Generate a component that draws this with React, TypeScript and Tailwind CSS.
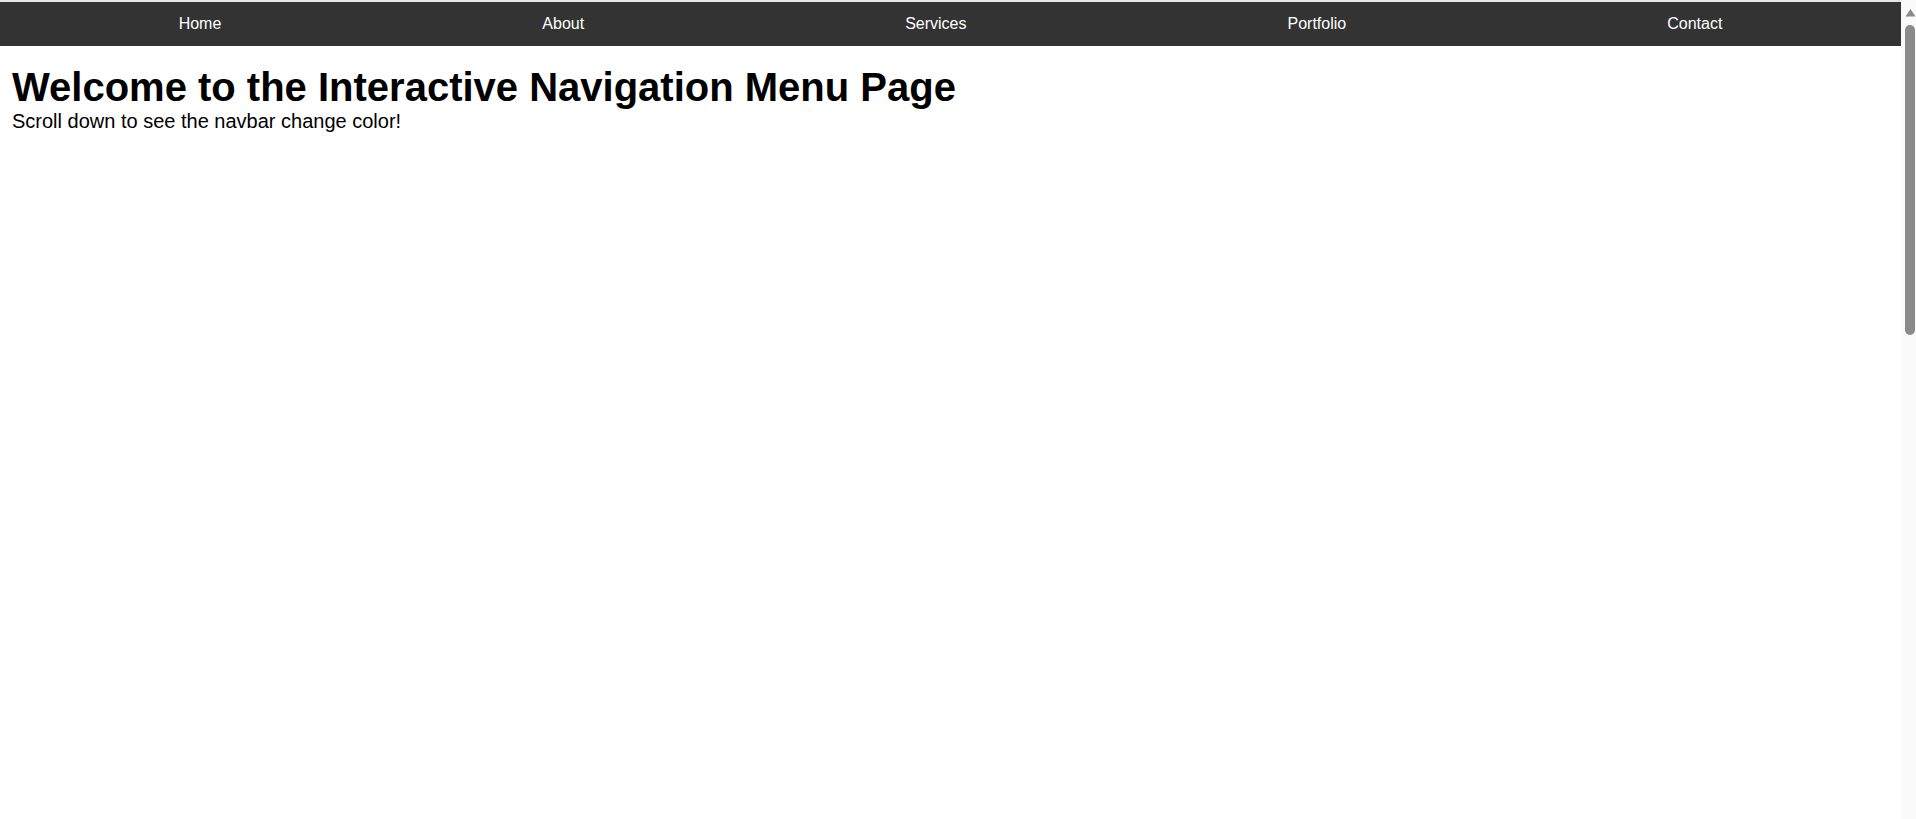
const links = ["Home", "About", "Services", "Portfolio", "Contact"];

function Scrollbar() {
  return (
    <div className="flex w-[15px] shrink-0 flex-col items-center bg-[#fafafa] pl-[3px]">
      <svg className="mt-[8px] h-[9px] w-[11px]" viewBox="0 0 11 9">
        <path d="M5.5 1 L10.5 8.5 L0.5 8.5 Z" fill="#8a8a8a" />
      </svg>
      <div className="mt-[8px] h-[310px] w-[10px] rounded-full bg-[#8a8a8a]" />
    </div>
  );
}

export default function App() {
  return (
    <div className="flex h-screen overflow-hidden bg-white text-black font-['Liberation_Sans',Arial,sans-serif]">
      <div className="min-w-0 flex-1">
        <nav className="border-t-2 border-[#e6e6e6] bg-[#333333]">
          <ul className="flex h-[44px] items-center justify-center gap-[321px]">
            {links.map((l) => (
              <li key={l}>
                <a href="#" className="block text-base leading-[normal] text-white">
                  {l}
                </a>
              </li>
            ))}
          </ul>
        </nav>

        <main className="px-3 pt-[19px]">
          <h1 className="text-[40px] font-bold leading-[normal]">
            Welcome to the Interactive Navigation Menu Page
          </h1>
          <p className="text-[20px] leading-[normal]">Scroll down to see the navbar change color!</p>
        </main>
      </div>
      <Scrollbar />
    </div>
  );
}
